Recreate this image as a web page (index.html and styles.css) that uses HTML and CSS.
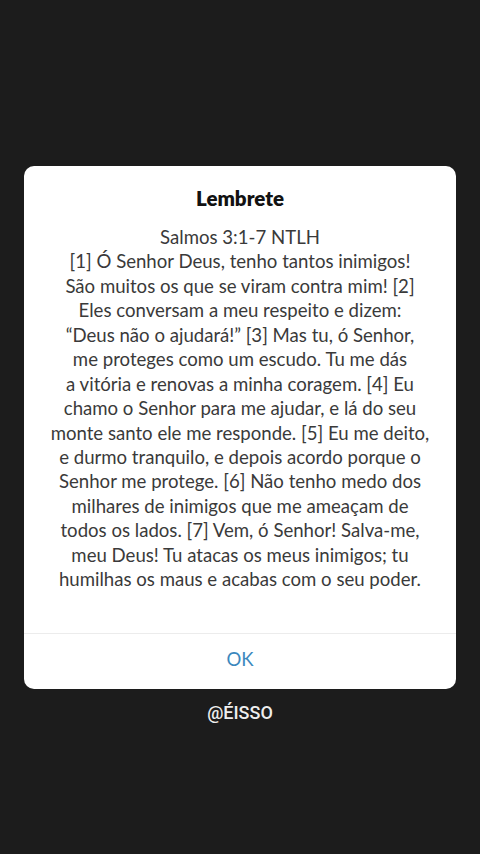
FILE: index.html
```html
<!DOCTYPE html>
<html lang="pt">
<head>
    <meta charset="UTF-8">
    <meta name="viewport" content="width=device-width, initial-scale=1.0">
    <title>Lembrete</title>
    <link rel="stylesheet" href="styles.css">
</head>
<body>
    <div class="dialog">
        <div class="dialog-content">
            <h1 class="dialog-title">Lembrete</h1>
            <p class="dialog-text">
                Salmos 3:1-7 NTLH<br>
                [1] Ó Senhor Deus, tenho tantos inimigos!<br>
                São muitos os que se viram contra mim! [2]<br>
                Eles conversam a meu respeito e dizem:<br>
                “Deus não o ajudará!” [3] Mas tu, ó Senhor,<br>
                me proteges como um escudo. Tu me dás<br>
                a vitória e renovas a minha coragem. [4] Eu<br>
                chamo o Senhor para me ajudar, e lá do seu<br>
                monte santo ele me responde. [5] Eu me deito,<br>
                e durmo tranquilo, e depois acordo porque o<br>
                Senhor me protege. [6] Não tenho medo dos<br>
                milhares de inimigos que me ameaçam de<br>
                todos os lados. [7] Vem, ó Senhor! Salva-me,<br>
                meu Deus! Tu atacas os meus inimigos; tu<br>
                humilhas os maus e acabas com o seu poder.
            </p>
        </div>
        <button class="dialog-button">OK</button>
    </div>
    <div class="handle">@ÉISSO</div>
</body>
</html>
```

FILE: styles.css
```css
body {
    margin: 0;
    height: 854px;
    background-color: #1c1c1c;
    font-family: Lato, "Noto Sans", sans-serif;
    display: flex;
    flex-direction: column;
    align-items: center;
    padding-top: 166px;
    box-sizing: border-box;
}
.dialog {
    width: 432px;
    background-color: #fff;
    border-radius: 10px;
    overflow: hidden;
}
.dialog-content {
    padding: 19px 10px 41px;
    text-align: center;
}
.dialog-title {
    margin: 0 0 14px;
    font-size: 20.5px;
    line-height: 26px;
    font-weight: 800;
    color: #121212;
}
.dialog-text {
    margin: 0;
    font-size: 18.6px;
    line-height: 24.43px;
    color: #3a3a3a;
    white-space: nowrap;
}
.dialog-button {
    display: block;
    width: 100%;
    height: 56px;
    padding: 0 0 5px;
    border: none;
    border-top: 1px solid #ececec;
    background: none;
    font-family: Lato, "Noto Sans", sans-serif;
    font-size: 18.5px;
    color: #3b88bd;
    cursor: pointer;
}
.handle {
    margin-top: 12px;
    font-family: Roboto, sans-serif;
    font-weight: 500;
    font-size: 18px;
    line-height: 24px;
    color: #eee;
}
```
